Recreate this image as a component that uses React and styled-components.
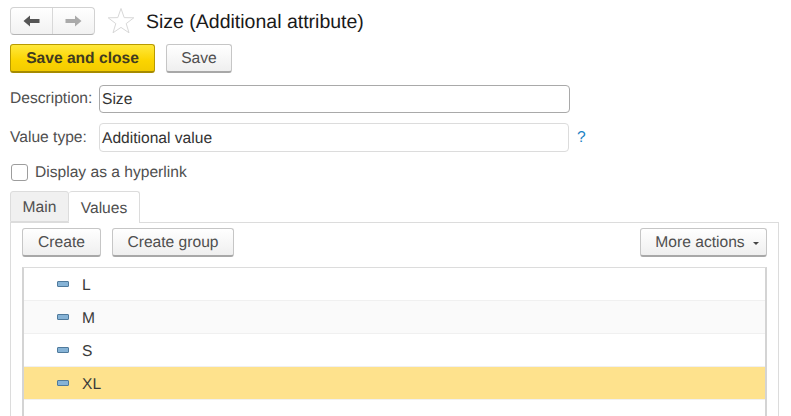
import React from 'react'
import styled, { createGlobalStyle } from 'styled-components'

const GlobalStyle = createGlobalStyle`
  html, body {
    margin: 0;
    height: 416px;
    overflow: hidden;
    background: #fff;
  }
`
const Page = styled.div`
  width: 791px;
  height: 416px;
  overflow: hidden;
  padding: 7px 12px 0 10px;
  box-sizing: border-box;
  font-family: 'Liberation Sans', Arial, sans-serif;
  font-size: 15.6px;
  text-rendering: geometricPrecision;
  color: #4f4f4f;
`
const TitleBar = styled.div`
  display: flex;
  align-items: center;
  height: 28px;
`
const NavGroup = styled.div`
  display: flex;
  width: 85px;
  height: 28px;
  box-sizing: border-box;
  border: 1px solid #d2d2d2;
  border-bottom-color: #b4b4b4;
  border-radius: 4px;
  background: linear-gradient(#fff, #f2f2f2);
`
const NavButton = styled.div`
  flex: 1;
  display: flex;
  align-items: center;
  justify-content: center;
  & + & {
    border-left: 1px solid #d8d8d8;
  }
`
const Star = styled.svg`
  width: 28px;
  height: 28px;
  margin-left: 12px;
`
const Title = styled.h1`
  margin: 0 0 0 11px;
  padding-top: 2px;
  font-size: 19.5px;
  font-weight: 400;
  color: #1a1a1a;
`
const CommandBar = styled.div`
  display: flex;
  gap: 11px;
  margin-top: 9px;
`
const Button = styled.div`
  display: flex;
  align-items: center;
  justify-content: center;
  gap: 8px;
  box-sizing: border-box;
  width: ${p => p.$width}px;
  height: 29px;
  padding-top: 2px;
  border: 1px solid #c6c6c6;
  border-bottom: 2px solid #a8a8a8;
  border-radius: 3px;
  background: linear-gradient(#fff, #efefef);
  white-space: nowrap;
`
const PrimaryButton = styled(Button)`
  border: 1px solid #b89a00;
  border-bottom: 2px solid #a68b00;
  background: linear-gradient(#ffe83c, #fbd400 60%, #f3cb00);
  font-weight: 700;
  color: #403b20;
`
const MenuButton = styled(Button)`
  padding-left: 7px;
`
const Field = styled.div`
  display: flex;
  align-items: center;
  margin-top: ${p => p.$top}px;
`
const Label = styled.label`
  width: 89px;
  flex: none;
`
const Input = styled.div`
  width: ${p => p.$width}px;
  height: ${p => p.$height}px;
  box-sizing: border-box;
  display: flex;
  align-items: center;
  padding: 2px 0 0 2px;
  border: 1px solid ${p => (p.$active ? '#a9a9a9' : '#dcdcdc')};
  border-radius: 4px;
  color: #333;
`
const Help = styled.span`
  margin-left: 8px;
  color: #1b82c4;
`
const CheckRow = styled.div`
  display: flex;
  align-items: center;
  gap: 7px;
  margin: 12px 0 0 1px;
  height: 17px;
`
const Checkbox = styled.div`
  width: 17px;
  height: 17px;
  box-sizing: border-box;
  border: 1px solid #9d9d9d;
  border-radius: 3px;
`
const Tabs = styled.div`
  display: flex;
  align-items: flex-end;
  height: 32px;
  margin-top: 9px;
`
const Tab = styled.div`
  display: flex;
  align-items: center;
  justify-content: center;
  box-sizing: border-box;
  width: ${p => p.$width}px;
  height: ${p => (p.$active ? 32 : 31)}px;
  padding-top: 3px;
  border: 1px solid #dcdcdc;
  border-bottom: ${p => (p.$active ? 'none' : '1px solid #dcdcdc')};
  border-left: ${p => (p.$active ? 'none' : '1px solid #dcdcdc')};
  border-radius: 3px 3px 0 0;
  background: ${p => (p.$active ? '#fff' : '#f0f0f0')};
  margin-bottom: ${p => (p.$active ? -1 : 0)}px;
  position: relative;
`
const Panel = styled.div`
  border: 1px solid #dcdcdc;
  border-bottom: none;
  height: 200px;
  box-sizing: border-box;
  padding: 5px 11px 0 11px;
`
const Toolbar = styled.div`
  display: flex;
  gap: 11px;
`
const Spacer = styled.div`
  flex: 1;
`
const Caret = styled.span`
  width: 0;
  height: 0;
  border-left: 3px solid transparent;
  border-right: 3px solid transparent;
  border-top: 3px solid #444;
`
const List = styled.div`
  margin-top: 10px;
  border: 1px solid #dcdcdc;
  border-left: 2px solid #d4d4d4;
  border-right: 2px solid #d4d4d4;
  border-bottom: none;
  height: 160px;
`
const Row = styled.div`
  display: flex;
  align-items: center;
  height: 33px;
  box-sizing: border-box;
  padding: 3px 0 0 33px;
  border-bottom: 1px solid #f0f0f0;
  background: ${p => (p.$selected ? '#fee28d' : p.$odd ? '#fafafa' : '#fff')};
  color: #3a3a3a;
`
const Marker = styled.span`
  width: 12px;
  height: 6px;
  box-sizing: border-box;
  margin: 0 13px 4px 0;
  border: 1px solid #4f7a9c;
  border-radius: 1px;
  background: #86b3d6;
`

function Arrow({ left, color }) {
  return (
    <svg width="17" height="12" viewBox="0 0 17 12">
      <path
        d={left ? 'M0.5 6 L7 0.5 V4 H16.5 V8 H7 V11.5 Z' : 'M16.5 6 L10 0.5 V4 H0.5 V8 H10 V11.5 Z'}
        fill={color}
      />
    </svg>
  )
}

const rows = ['L', 'M', 'S', 'XL']

export default function App() {
  return (
    <Page>
      <GlobalStyle />
      <TitleBar>
        <NavGroup>
          <NavButton>
            <Arrow left color="#555" />
          </NavButton>
          <NavButton>
            <Arrow color="#aaa" />
          </NavButton>
        </NavGroup>
        <Star viewBox="0 0 28 28">
          <path
            d="M14 1.5 L17.2 10.6 L26.8 10.8 L19.2 16.6 L22 25.8 L14 20.4 L6 25.8 L8.8 16.6 L1.2 10.8 L10.8 10.6 Z"
            fill="#fff"
            stroke="#d8d8d8"
          />
        </Star>
        <Title>Size (Additional attribute)</Title>
      </TitleBar>
      <CommandBar>
        <PrimaryButton $width={145}>Save and close</PrimaryButton>
        <Button $width={66}>Save</Button>
      </CommandBar>
      <Field $top={12}>
        <Label>Description:</Label>
        <Input $width={471} $height={28} $active>Size</Input>
      </Field>
      <Field $top={10}>
        <Label>Value type:</Label>
        <Input $width={470} $height={29}>Additional value</Input>
        <Help>?</Help>
      </Field>
      <CheckRow>
        <Checkbox />
        Display as a hyperlink
      </CheckRow>
      <Tabs>
        <Tab $width={59}>Main</Tab>
        <Tab $width={71} $active>Values</Tab>
      </Tabs>
      <Panel>
        <Toolbar>
          <Button $width={79}>Create</Button>
          <Button $width={122}>Create group</Button>
          <Spacer />
          <MenuButton $width={127}>
            More actions
            <Caret />
          </MenuButton>
        </Toolbar>
        <List>
          {rows.map((r, i) => (
            <Row key={r} $odd={i === 1} $selected={r === 'XL'}>
              <Marker />
              {r}
            </Row>
          ))}
        </List>
      </Panel>
    </Page>
  )
}
